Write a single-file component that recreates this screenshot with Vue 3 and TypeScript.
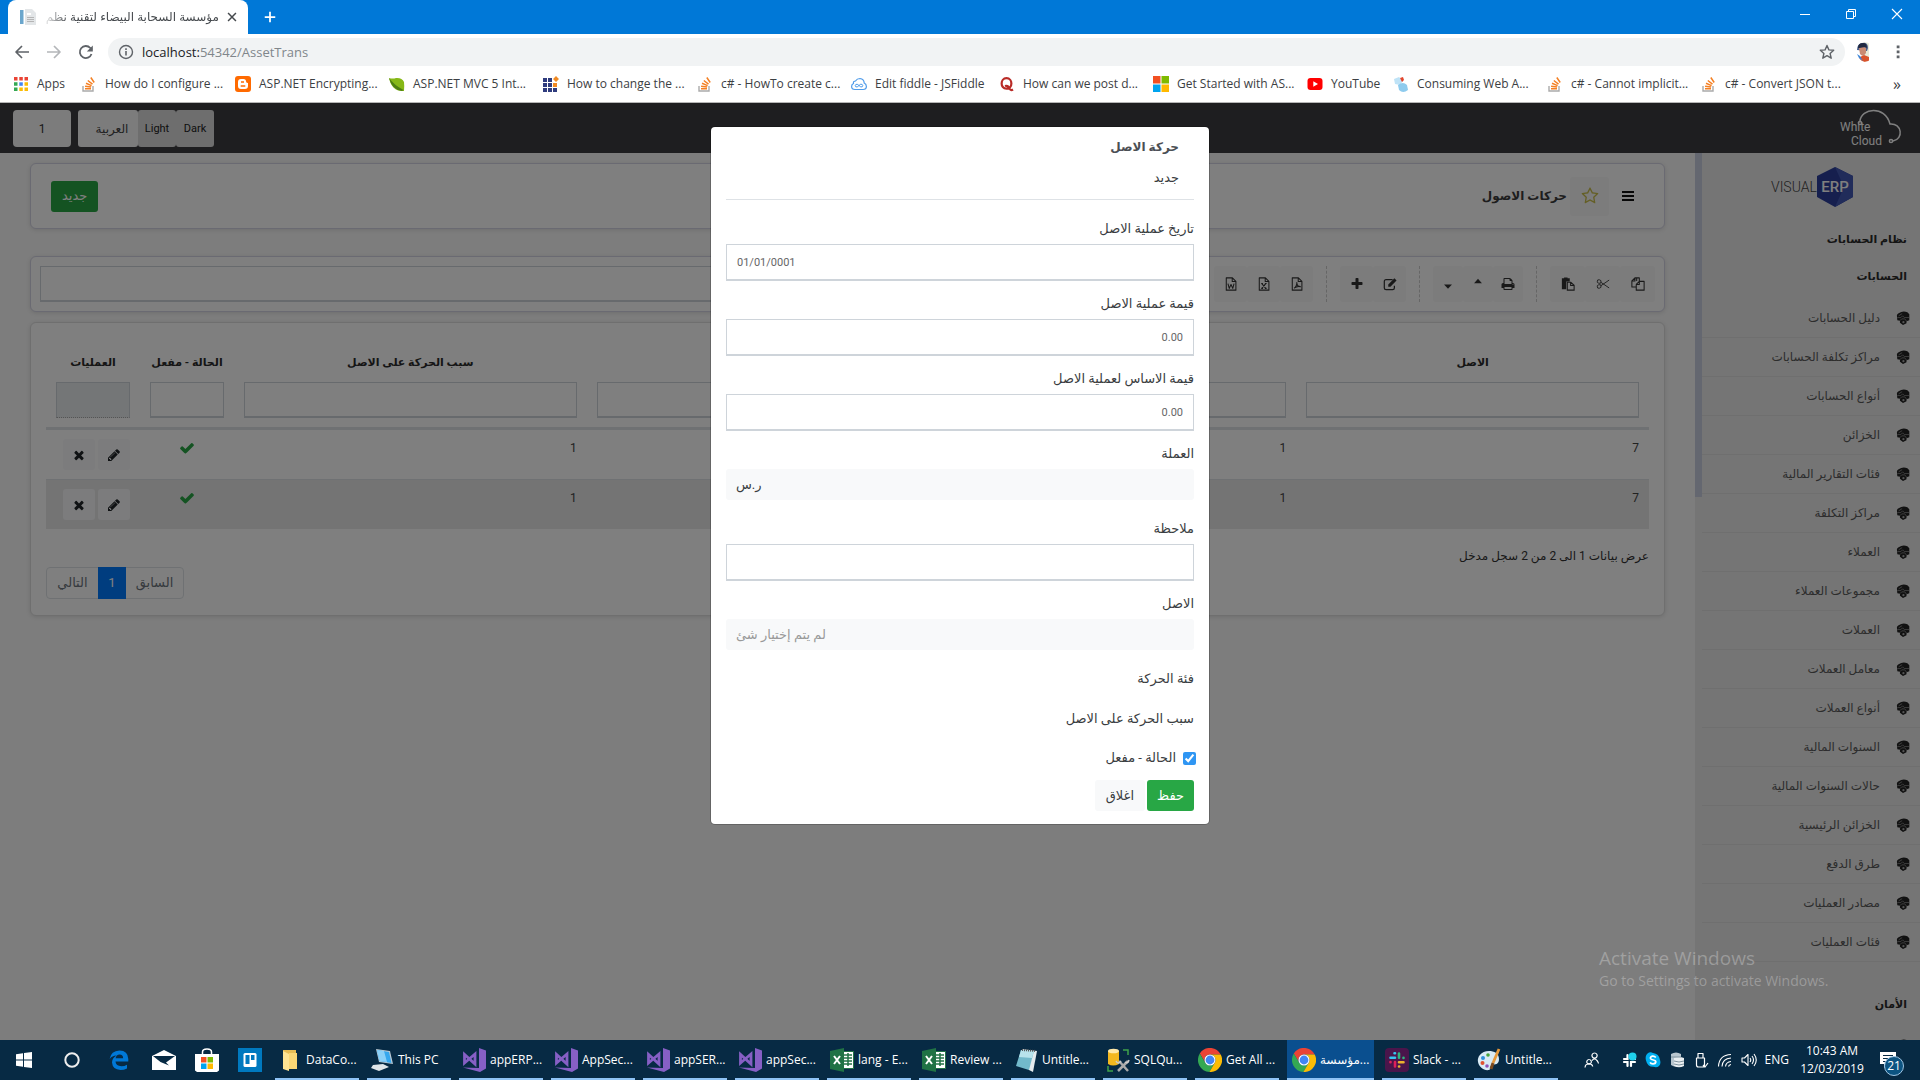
<script setup lang="ts">
import { ref } from 'vue'

interface Glyph { box: string; body: string }

const fa = (d: string): Glyph => ({ box: '0 0 1792 1792', body: `<path fill="currentColor" d="${d}"/>` })
const line = (d: string, w = 1.2): Glyph => ({
  box: '0 0 16 16',
  body: `<path fill="none" stroke="currentColor" stroke-width="${w}" stroke-linejoin="round" d="${d}"/>`,
})
const sheet = 'M2.6 1h7l4 4v10h-11zM9.4 1v4.2h4.2'

const glyphs: Record<string, Glyph> = {
  check: fa('M1671 566q0 40-28 68l-724 724-136 136q-28 28-68 28t-68-28l-136-136-362-362q-28-28-28-68t28-68l136-136q28-28 68-28t68 28l294 295 656-657q28-28 68-28t68 28l136 136q28 28 28 68z'),
  times: fa('M1490 1322q0 40-28 68l-136 136q-28 28-68 28t-68-28l-294-294-294 294q-28 28-68 28t-68-28l-136-136q-28-28-28-68t28-68l294-294-294-294q-28-28-28-68t28-68l136-136q28-28 68-28t68 28l294 294 294-294q28-28 68-28t68 28l136 136q28 28 28 68t-28 68l-294 294 294 294q28 28 28 68z'),
  pencil: fa('M491 1536l91-91-235-235-91 91v107h128v128h107zm523-928q0-22-22-22-10 0-17 7l-542 542q-7 7-7 17 0 22 22 22 10 0 17-7l542-542q7-7 7-17zm-54-192l416 416-832 832h-416v-416zm683 96q0 53-37 90l-166 166-416-416 166-165q36-38 90-38 53 0 91 38l235 234q37 39 37 91z'),
  plus: fa('M1600 736v192q0 40-28 68t-68 28h-416v416q0 40-28 68t-68 28h-192q-40 0-68-28t-28-68v-416h-416q-40 0-68-28t-28-68v-192q0-40 28-68t68-28h416v-416q0-40 28-68t68-28h192q40 0 68 28t28 68v416h416q40 0 68 28t28 68z'),
  star: fa('M1201 1004l306-297-422-62-189-382-189 382-422 62 306 297-73 421 378-199 377 199zm527-357q0 22-26 48l-363 354 86 500q1 7 1 20 0 50-41 50-19 0-40-12l-449-236-449 236q-22 12-40 12-21 0-31.5-14.5t-10.5-35.5q0-6 2-20l86-500-364-354q-25-27-25-48 0-37 56-46l502-73 225-455q19-41 49-41t49 41l225 455 502 73q56 9 56 46z'),
  print: fa('M448 1536h896v-256h-896v256zm0-640h896v-384h-160q-40 0-68-28t-28-68v-160h-640v640zm1152 64q0-26-19-45t-45-19-45 19-19 45 19 45 45 19 45-19 19-45zm128 0v416q0 13-9.5 22.5t-22.5 9.5h-224v160q0 40-28 68t-68 28h-960q-40 0-68-28t-28-68v-160h-224q-13 0-22.5-9.5t-9.5-22.5v-416q0-79 56.5-135.5t135.5-56.5h64v-544q0-40 28-68t68-28h672q40 0 88 20t76 48l152 152q28 28 48 76t20 88v256h64q79 0 135.5 56.5t56.5 135.5z'),
  bars: { box: '0 0 12 10', body: '<path fill="currentColor" d="M0 0h12v2H0zM0 4h12v2H0zM0 8h12v2H0z"/>' },
  up: { box: '0 0 16 16', body: '<path fill="currentColor" d="M3.5 7L8 2l4.500 5z"/>' },
  down: { box: '0 0 16 16', body: '<path fill="currentColor" d="M3.500 8.500h9L8 13.500z"/>' },
  copy: line('M6.500 4.500V1h-2L1 4.500v7h5M1 4.500h3.500V1M9.500 5v3.500H6V15h9V5H9.500L6 8.500M9.500 4.500V1h-3'),
  cut: line('M5.500 6L15 12.500M5.500 10L15 3.500M1.500 4.700a2.200 1.700 20 1 0 4.200 1a2.200 1.700 20 1 0-4.200-1M1.500 11.300a2.200 1.700-20 1 1 4.200-1a2.200 1.700-20 1 1-4.200 1', 1),
  paste: { box: '0 0 16 16', body: '<path fill="currentColor" d="M1 1.500h2.500V.5h4v1H10V5H6v9H1z"/><path fill="none" stroke="currentColor" stroke-width="1.200" d="M7.200 6h4L15 9.500V15H7.200zM11 6v3.800h4"/>' },
  edit: { box: '0 0 16 16', body: '<path fill="none" stroke="currentColor" stroke-width="1.400" d="M11 3H3.500Q1.500 3 1.500 5v7.500q0 2 2 2H11q2 0 2-2V10"/><path fill="currentColor" d="M6 8.500L13 1.500l2.500 2.500-7 7H6z"/>' },
  pdf: line(sheet + 'M4.600 12.800c2-1 3.600-4.500 3.200-6.500c0 3 1.600 4.600 4 4.700c-2.500-.6-5 .2-7.200 1.800'),
  excel: line(sheet + 'M5.500 7.500l4.500 5.500M10 7.500L5.500 13M4.800 7.500h2M9 7.500h2M4.800 13h2M9 13h2'),
  word: line(sheet + 'M4.500 7.500L6 13l2-4.500L10 13l1.500-5.500'),
  cube: {
    box: '0 0 16 16',
    body: '<path fill="#222" d="M1 5Q1 3.500 3 2.500Q8-.8 13 1.500l2.200 2.200v7L12 11.800V14L8 16l-3.500-2.500V11L1.500 10.500z"/><path fill="none" stroke="#888" d="M3 5.500l4-2.500M1.500 7.500h4l2-2 2 2h5.500M4.500 11l2-2h3.500l2 2.500"/><circle cx="8.500" cy="12.800" r="1.300" fill="#aaa"/>',
  },
  back: line('M15 8H2M8 2L2 8l6 6', 1.7),
  forward: line('M1 8h13M8 2l6 6-6 6', 1.7),
  reload: { box: '0 0 16 16', body: '<path fill="none" stroke="currentColor" stroke-width="1.800" d="M13.500 10A6 6 0 1 1 12.300 4L14 5.700"/><path fill="currentColor" d="M14.800 1.500v6h-6z"/>' },
  info: { box: '0 0 16 16', body: '<circle cx="8" cy="8" r="6.500" fill="none" stroke="currentColor" stroke-width="1.400"/><path fill="currentColor" d="M7.200 7h1.600v4.500H7.200zM7.200 4.300h1.600v1.600H7.200z"/>' },
  favourite: line('M8 1.500l1.900 4.400 4.800.4-3.600 3.200 1.100 4.700L8 11.700l-4.200 2.500 1.100-4.700L1.300 6.300l4.800-.4z', 1.4),
  close: line('M3.500 3.500l9 9M12.500 3.500l-9 9', 1.7),
  newtab: line('M8 2v12M2 8h12', 2),
  minimise: line('M3 8.500h10', 1),
  restore: line('M3.500 5.500h7v7h-7zM5.500 5.500v-2h7v7h-2', 1),
  quit: line('M3 3l10 10M13 3L3 13', 1.1),
  dots: { box: '0 0 16 16', body: '<path fill="currentColor" d="M6.700 1.500h2.800v2.800H6.700zM6.700 6.500h2.800v2.800H6.700zM6.700 11.500h2.800v2.800H6.700z"/>' },
  page: { box: '0 0 16 16', body: '<path fill="#e3e6e8" d="M5 0h7l4 4v12H5z"/><path fill="#6ba6cc" d="M0 1h3.500v14H0z"/><path fill="#fff" d="M7 4h4v2H7z"/><path stroke="#b5b5b5" d="M7 8.500h7M7 10.500h7M7 12.500h7"/>' },
  avatar: { box: '0 0 20 20', body: '<path fill="#e8ead8" d="M10 0h5v20h-5z"/><path fill="#4a5f8a" d="M3 8Q3 2 8 1q6-1 6 5l-1 3z"/><path fill="#c98a72" d="M5 6q4-2 7 0v5q-3 5-6 1z"/><path fill="#202840" d="M4 6q0-5 5-5 4 0 4 5l-2-1-6 1z"/><path fill="#d9532c" d="M6 15l4-2 5 2v5h-4q-5-1-6-5z"/><path fill="#3f86d8" d="M3 12l3 2 3 5-4-3z"/>' },
  apps: { box: '0 0 16 16', body: '<path fill="#ea4335" d="M1 1h3.500v3.500H1zM6.300 1h3.500v3.500H6.300zM11.500 1H15v3.500h-3.500z"/><path fill="#34a853" d="M1 6.300h3.500v3.500H1zM1 11.500h3.500V15H1z"/><path fill="#4285f4" d="M6.300 6.300h3.500v3.500H6.300z"/><path fill="#fbbc05" d="M11.500 6.300H15v3.500h-3.500zM6.300 11.500h3.500V15H6.300zM11.500 11.500H15V15h-3.500z"/>' },
  stack: { box: '0 0 16 16', body: '<path fill="none" stroke="#aaa" stroke-width="1.400" d="M2 10v5h10v-5"/><path stroke="#f48024" stroke-width="1.500" d="M4 12.700h6M4.100 10.200l6 .9M5 7.300l5.600 2.300M6.800 4.500l4.700 3.700M9.800 1.500l3.400 5"/>' },
  blogger: { box: '0 0 16 16', body: '<rect width="16" height="16" rx="3" fill="#ff6a00"/><path fill="#fff" fill-rule="evenodd" d="M6 3h2.500Q11 3 11.200 6q.2.900 1.800 1v3q0 3-3 3H6q-3 0-3-3V6q0-3 3-3zm0 2.300v1.500h3V5.300zM5.700 9.300v1.500h4.600V9.300z"/>' },
  leaf: { box: '0 0 16 16', body: '<path fill="#86b817" d="M0 2q4 1 7 0 6-.5 8 4 .5 4 0 9Q3 16 0 2z"/><path fill="#4d7f12" d="M0 2q5 7 14.500 12L13 15Q3 14 0 2z"/>' },
  grid: { box: '0 0 16 16', body: '<path fill="#2f3c7e" d="M0 2h4v4H0zM5 2h4v4H5zM0 7h4v4H0zM5 7h4v4H5zM10 7h4v4h-4zM0 12h4v4H0zM5 12h4v4H5zM10 12h4v4h-4z"/><path fill="#f08a24" d="M13 0l3 3-3 3-3-3zM10 7h4v4h-4z"/>' },
  fiddle: { box: '0 0 16 16', body: '<path fill="none" stroke="#4e9bea" stroke-width="1.200" d="M4 13.500Q.6 13.500.6 10.500 .6 8.300 2.500 7.500 2 5 4.500 5 6 2.500 9 2.500q4 .5 4.200 4.500 2.200 1 2.200 3.500 0 3-3.400 3z"/><path fill="none" stroke="#4e9bea" d="M8 9.500Q6 7.500 4.800 8.500q-1.200 1.200 0 2.300Q6 11.700 8 9.500t3.200-1q1.200 1.200 0 2.300Q10 11.700 8 9.500z"/>' },
  quora: { box: '0 0 16 16', body: '<path fill="none" stroke="#b92b27" stroke-width="2.200" d="M7.500 2.200c-6.500 0-6.500 10.500 0 10.500s6.500-10.500 0-10.500zM6 10q3-1 4.500 2.500 1.200 2.500 3.500 1"/>' },
  microsoft: { box: '0 0 16 16', body: '<path fill="#f25022" d="M0 0h7.500v7.500H0z"/><path fill="#7fba00" d="M8.500 0H16v7.500H8.500z"/><path fill="#00a4ef" d="M0 8.500h7.500V16H0z"/><path fill="#ffb900" d="M8.500 8.500H16V16H8.500z"/>' },
  youtube: { box: '0 0 16 16', body: '<rect x=".5" y="2" width="15" height="12" rx="3" fill="#f00"/><path fill="#fff" d="M6.300 5.300L11 8l-4.700 2.700z"/>' },
  consuming: { box: '0 0 16 16', body: '<path fill="#bfe3f7" d="M1 3l5-2 4 4-3 4-5-1z"/><path fill="#e2452c" d="M7 2l3-1 1 3-2 2z"/><path fill="#8ecbee" d="M5 9q5-4 9 0l1 5q-5 4-9 0z"/>' },
  windows: { box: '0 0 16 16', body: '<path fill="#fff" d="M0 2.200L7 1.200v6.300H0zM8 1l8-1v7.500H8zM0 8.500h7v6.300l-7-1zM8 8.500h8V16l-8-1z"/>' },
  cortana: { box: '0 0 16 16', body: '<circle cx="8" cy="8" r="6.700" fill="none" stroke="#eee" stroke-width="2"/>' },
  edge: { box: '0 0 20 20', body: '<path fill="#0078d7" d="M.6 9Q2 .8 10.500.5 19 .7 19.300 9v2.500H6.500q.3 4.500 6 4.700 3 0 5.500-1.500v3.800Q15 20 11.500 20 3.500 19.500 3 12.500 3 8 7.500 5.500 3 5.500.6 9zm6 -.8h7.500q0-3.700-3.500-3.700-3.500.2-4 3.700z"/>' },
  mail: { box: '0 0 24 20', body: '<path fill="#fff" d="M0 6L12 0l12 6v14H0z"/><path fill="#072a44" d="M1 6h22l-9 6.500 3 3L8.500 12z"/>' },
  store: { box: '0 0 24 24', body: '<path fill="none" stroke="#fff" stroke-width="1.500" d="M7.500 6V4q0-3 4.500-3t4.500 3v2"/><path fill="#fff" d="M0 6h24v16.500l-2 1.500H2l-2-1.500z"/><path fill="#f25022" d="M6 9h5.500v5.500H6z"/><path fill="#7fba00" d="M12.500 9H18v5.500h-5.500z"/><path fill="#00a4ef" d="M6 15.500h5.500V21H6z"/><path fill="#ffb900" d="M12.500 15.500H18V21h-5.500z"/>' },
  trello: { box: '0 0 24 24', body: '<path fill="#0079bf" d="M0 0h24v24H0z"/><rect x="5.500" y="5" width="13" height="14" rx="1.500" fill="#fff"/><path fill="#0079bf" d="M7.500 7h4v9h-4zM13 7h3.500v5H13z"/>' },
  folder: { box: '0 0 24 24', body: '<path fill="#e8bd55" d="M5 2h13v19H5z"/><path fill="#ffe493" d="M5 3l6 3v17l-6-2z"/><path fill="#fbd775" d="M11 5h8v16h-8z"/>' },
  pc: { box: '0 0 24 24', body: '<path fill="#b9c7d2" d="M6 1l14 2 3 13-14-2z"/><path fill="#35a7ee" d="M7 2l12 2 2.500 11-12-2z"/><path fill="#8ad0f8" d="M7 2l7 1 3 11-7.500-1z"/><path fill="#dfe5e9" d="M3 17l10-1 6 3-10 4-8-3z"/>' },
  vs: { box: '0 0 24 24', body: '<path fill="#865fc5" d="M17 0l7 2.500v18L18 24 1 19.500l16 .5z"/><path fill="none" stroke="#865fc5" stroke-width="2.800" d="M2.500 6.500v8.500L13 6v10z"/>' },
  xls: { box: '0 0 24 24', body: '<path fill="#fff" stroke="#207245" d="M12 3.500h11.500v17H12z"/><path stroke="#207245" stroke-width="1.500" d="M14 7h8M14 10h8M14 13h8M14 16h8M18 5v13"/><path fill="#207245" d="M0 3l14-3v24L0 21z"/><path stroke="#fff" stroke-width="2" d="M4 8l6 8M10 8l-6 8"/>' },
  note: { box: '0 0 24 24', body: '<path fill="#e5ebee" d="M8 1l15 2-4 21-4-2z"/><path fill="#72b9cb" d="M7 2l13 1-5 19L2 18z"/><path fill="#b8e3ec" d="M7 2l13 1-2 7-13-1z"/><path stroke="#555" stroke-dasharray="1 1" stroke-width="2" d="M8 2l14 1"/>' },
  sql: { box: '0 0 24 24', body: '<path fill="#f3b81f" d="M2 3h11v13q-6 3-11 0z"/><ellipse cx="7.500" cy="3" rx="5.500" ry="2.300" fill="#ffe9a8"/><path fill="none" stroke="#3fa24a" stroke-width="1.500" d="M17 2h5v5M2 18v5h5"/><path stroke="#aaa" stroke-width="2.500" d="M12 23l10-10M13 13l9 10"/><path fill="none" stroke="#ccc" stroke-width="1.500" d="M10 13q2 4 5 0M19 14q3 2 4-2"/>' },
  chrome: { box: '0 0 24 24', body: '<path fill="#ea4335" d="M1.800 5.600A12 12 0 0 1 22.700 6.500H12A5.500 5.500 0 0 0 7.200 14.700z"/><path fill="#34a853" d="M1.800 5.600A12 12 0 0 0 11.400 24L16.800 14.700A5.500 5.500 0 0 1 7.200 14.700z"/><path fill="#fbbc05" d="M22.700 6.500A12 12 0 0 1 11.400 24L16.800 14.700A5.500 5.500 0 0 0 12 6.500z"/><circle cx="12" cy="12" r="5.500" fill="#fff"/><circle cx="12" cy="12" r="4.400" fill="#4285f4"/>' },
  slack: { box: '0 0 24 24', body: '<rect width="24" height="24" rx="4" fill="#4a154b"/><g fill="none" stroke-width="2.600" stroke-linecap="round"><path stroke="#36c5f0" d="M10 5.300h-.5M10 9.700H5.500"/><path stroke="#2eb67d" d="M14 5.500v4.300M18.500 9.700v.2"/><path stroke="#e01e5a" d="M5.500 14v.2M10 14v4.500"/><path stroke="#ecb22e" d="M14 14.200h4.500M14 18.500h.2"/></g>' },
  paint: { box: '0 0 24 24', body: '<path fill="#d9ebf5" d="M12 3C4 3 0 9 1 14s6 9 11 8c3-1 0-4 3-5s7 0 7-6-5-8-10-8z"/><circle cx="6" cy="10" r="2" fill="#2f8fd8"/><circle cx="11" cy="7" r="1.800" fill="#46a43c"/><circle cx="5.500" cy="15" r="2" fill="#e0532f"/><circle cx="10" cy="18" r="1.800" fill="#8c53b8"/><path stroke="#e79a3c" stroke-width="2.800" d="M22 1l-6 14"/><path stroke="#7b4a1e" stroke-width="3" d="M16 15l-2 6"/>' },
  people: line('M5 7.500a2.300 2.300 0 1 0 .1 0M1 15.500q.5-4 4-4 3.200 0 3.700 3M10.500 1a2.600 2.600 0 1 0 .1 0M8 8.500q2.500-3 5 0 1.200 1.500 1.500 3', 1.2),
  slackTray: { box: '0 0 16 16', body: '<path stroke="#fff" stroke-width="2.200" stroke-linecap="round" d="M6.500 3v4H3M10 7h4M6.500 14v-4H3M10 14v-4h4M10 3v4" fill="none"/><circle cx="11.500" cy="4.500" r="4" fill="#1fd2ee"/>' },
  skype: { box: '0 0 16 16', body: '<path fill="#00aff0" d="M4 .5q2-.8 4 .5 6 .5 7 7 1.200 4-1 6t-5.500.8Q2.500 15 1 8.500-.5 3 4 .5z"/><path fill="none" stroke="#fff" stroke-width="1.700" d="M10.800 5.500Q9.500 4 7.500 4.200 5 4.800 5.500 6.500 6 7.700 8.300 8q2.700.5 2.500 2-.3 1.900-3 1.800-2 0-2.700-1.500"/>' },
  database: { box: '0 0 16 16', body: '<path fill="#b8c6cf" d="M2 2q5-3 10 0v11q-5 3-10 0z"/><path fill="#e9eef1" d="M5 6q5-2 10 0v8q-5 2.500-10 0z"/><path stroke="#7e929e" d="M2 5h10M5 9q5 2 10 0M5 12q5 2 10 0" fill="none"/>' },
  usb: line('M5 6V1.500h5V6M3.500 6h8v7q0 2-2 2h-4q-2 0-2-2zM10 13l2 2 3-4', 1.200),
  wifi: line('M1.500 14.500Q2 3 14 2.500M5 14.500Q5.500 6.500 14 6M8.500 14.500q.5-4.500 5.500-5M11.500 14.500q.5-1.800 2.500-2', 1.100),
  volume: line('M1 6h2.500L7 2.500v11L3.500 10H1zM9 6q1.500 2 0 4M11 4q3 4 0 8M13 2q4.500 6 0 12', 1.100),
  action: { box: '0 0 18 18', body: '<path fill="#fff" d="M1 1h16v12H9l-4 4v-4H1z"/><path stroke="#072a44" d="M4 4.500h10M4 7.500h10M4 10.500h6"/>' },
}

const bookmarks = [
  { icon: 'apps', label: 'Apps', size: 'apps' },
  { icon: 'stack', label: 'How do I configure ...', size: 'full' },
  { icon: 'blogger', label: 'ASP.NET Encrypting...', size: 'full' },
  { icon: 'leaf', label: 'ASP.NET MVC 5 Int...', size: 'full' },
  { icon: 'grid', label: 'How to change the ...', size: 'full' },
  { icon: 'stack', label: 'c# - HowTo create c...', size: 'full' },
  { icon: 'fiddle', label: 'Edit fiddle - JSFiddle', size: 'mid' },
  { icon: 'quora', label: 'How can we post d...', size: 'full' },
  { icon: 'microsoft', label: 'Get Started with AS...', size: 'full' },
  { icon: 'youtube', label: 'YouTube', size: 'short' },
  { icon: 'consuming', label: 'Consuming Web A...', size: 'full' },
  { icon: 'stack', label: 'c# - Cannot implicit...', size: 'full' },
  { icon: 'stack', label: 'c# - Convert JSON t...', size: 'full' },
]

const toolGroups = [
  { name: 'clipboard', tools: ['copy', 'cut', 'paste'] },
  { name: 'order', tools: ['print', 'up', 'down'] },
  { name: 'record', tools: ['edit', 'plus'] },
  { name: 'export', tools: ['pdf', 'excel', 'word'] },
]

const menu = [
  'دليل الحسابات', 'مراكز تكلفة الحسابات', 'أنواع الحسابات', 'الخزائن', 'فئات التقارير المالية',
  'مراكز التكلفة', 'العملاء', 'مجموعات العملاء', 'العملات', 'معامل العملات', 'أنواع العملات',
  'السنوات المالية', 'حالات السنوات المالية', 'الخزائن الرئيسية', 'طرق الدفع', 'مصادر العمليات', 'فئات العمليات',
]

const rows = [
  { asset: '7', category: '1', reason: '1' },
  { asset: '7', category: '1', reason: '1' },
]

const pinned = ['windows', 'cortana', 'edge', 'mail', 'store', 'trello']
const tasks = [
  { icon: 'folder', label: 'DataCo...' },
  { icon: 'pc', label: 'This PC' },
  { icon: 'vs', label: 'appERP...' },
  { icon: 'vs', label: 'AppSec...' },
  { icon: 'vs', label: 'appSER...' },
  { icon: 'vs', label: 'appSec...' },
  { icon: 'xls', label: 'lang - E...' },
  { icon: 'xls', label: 'Review ...' },
  { icon: 'note', label: 'Untitle...' },
  { icon: 'sql', label: 'SQLQu...' },
  { icon: 'chrome', label: 'Get All ...' },
  { icon: 'chrome', label: 'مؤسسة...', active: true },
  { icon: 'slack', label: 'Slack - ...' },
  { icon: 'paint', label: 'Untitle...' },
]
const tray = ['people', 'slackTray', 'skype', 'database', 'usb', 'wifi', 'volume']

const date = ref('01/01/0001')
const value = ref('0.00')
const baseValue = ref('0.00')
const note = ref('')
const enabled = ref(true)
const branch = ref('1')
</script>

<template>
  <div class="shell">
    <div class="tabs">
      <div class="tab">
        <svg class="i16" :viewBox="glyphs.page.box" v-html="glyphs.page.body" />
        <span class="tab-title" dir="rtl">مؤسسة السحابة البيضاء لتقنية نظم</span>
        <svg class="i14" :viewBox="glyphs.close.box" v-html="glyphs.close.body" />
      </div>
      <button class="new-tab"><svg class="i14" :viewBox="glyphs.newtab.box" v-html="glyphs.newtab.body" /></button>
      <div class="window-buttons">
        <button v-for="b in ['minimise', 'restore', 'quit']" :key="b">
          <svg class="i16" :viewBox="glyphs[b].box" v-html="glyphs[b].body" />
        </button>
      </div>
    </div>

    <div class="address">
      <button v-for="b in ['back', 'forward', 'reload']" :key="b" class="nav" :class="b">
        <svg class="i16" :viewBox="glyphs[b].box" v-html="glyphs[b].body" />
      </button>
      <div class="omnibox">
        <svg class="i16" :viewBox="glyphs.info.box" v-html="glyphs.info.body" />
        <span class="url"><b>localhost:</b>54342/AssetTrans</span>
        <svg class="i16" :viewBox="glyphs.favourite.box" v-html="glyphs.favourite.body" />
      </div>
      <svg class="avatar" :viewBox="glyphs.avatar.box" v-html="glyphs.avatar.body" />
      <svg class="i16" :viewBox="glyphs.dots.box" v-html="glyphs.dots.body" />
    </div>

    <nav class="bookmarks">
      <a v-for="(b, i) in bookmarks" :key="i" href="#" :class="b.size">
        <svg class="i16" :viewBox="glyphs[b.icon].box" v-html="glyphs[b.icon].body" />
        <span>{{ b.label }}</span>
      </a>
      <span class="more">»</span>
    </nav>

    <div class="page" dir="rtl">
      <header class="topbar">
        <svg class="cloud" viewBox="0 0 64 42">
          <g fill="none" stroke="#fff" stroke-width="1.500">
            <circle cx="21" cy="16" r="1.600" />
            <path d="M21 14C22 1 46-2 51 17C63 16 65 32 54 34" />
            <circle cx="52" cy="34" r="1.600" />
          </g>
          <g class="cloud-text" fill="#fff">
            <text x="1" y="24">White</text>
            <text x="12" y="38">Cloud</text>
          </g>
        </svg>
        <div class="topbar-tools" dir="ltr">
          <input v-model="branch" class="branch" aria-label="الفرع">
          <div class="switches">
            <button class="language">العربية</button>
            <button>Light</button>
            <button>Dark</button>
          </div>
        </div>
      </header>

      <div class="body">
        <aside class="sidebar">
          <div class="sidebar-main">
            <div class="logo" dir="ltr">
              <span>VISUAL</span>
              <svg viewBox="0 0 36 40">
                <path fill="#2c3f9c" d="M18 0l18 9v21l-18 10L0 30V9z" />
                <path fill="#4258b4" d="M18 0l18 9v21L18 40l9-20z" />
                <text x="18" y="25" text-anchor="middle" fill="#fff">ERP</text>
              </svg>
            </div>
            <h2>نظام الحسابات</h2>
            <h2>الحسابات</h2>
            <a v-for="item in menu" :key="item" href="#">
              <svg class="i14" :viewBox="glyphs.cube.box" v-html="glyphs.cube.body" />
              <span>{{ item }}</span>
            </a>
            <h2 class="security">الأمان</h2>
            <a href="#"><svg class="i14" :viewBox="glyphs.cube.box" v-html="glyphs.cube.body" /></a>
          </div>
          <div class="track"><div class="thumb" /></div>
        </aside>

        <main class="content">
          <section class="card title-card">
            <svg class="bars" :viewBox="glyphs.bars.box" v-html="glyphs.bars.body" />
            <button class="star"><svg class="i18" :viewBox="glyphs.star.box" v-html="glyphs.star.body" /></button>
            <h1>حركات الاصول</h1>
            <button class="btn green">جديد</button>
          </section>

          <section class="card tool-card">
            <div v-for="group in toolGroups" :key="group.name" class="tools" :class="group.name">
              <button v-for="t in group.tools" :key="t">
                <svg class="i14" :viewBox="glyphs[t].box" v-html="glyphs[t].body" />
              </button>
            </div>
            <input class="box search" aria-label="بحث">
          </section>

          <section class="card table-card">
            <table>
              <colgroup>
                <col class="wide"><col><col><col class="wide"><col class="narrow"><col class="narrow">
              </colgroup>
              <thead>
                <tr>
                  <th>الاصل</th>
                  <th />
                  <th />
                  <th>سبب الحركة على الاصل</th>
                  <th>الحالة - مفعل</th>
                  <th>العمليات</th>
                </tr>
                <tr class="filters">
                  <td v-for="n in 6" :key="n"><input class="box" :disabled="n === 6" aria-label="تصفية"></td>
                </tr>
              </thead>
              <tbody>
                <tr v-for="(r, i) in rows" :key="i">
                  <td>{{ r.asset }}</td>
                  <td>{{ r.category }}</td>
                  <td />
                  <td>{{ r.reason }}</td>
                  <td class="status"><svg class="i16" :viewBox="glyphs.check.box" v-html="glyphs.check.body" /></td>
                  <td>
                    <div class="actions">
                      <button v-for="a in ['pencil', 'times']" :key="a">
                        <svg class="i14" :viewBox="glyphs[a].box" v-html="glyphs[a].body" />
                      </button>
                    </div>
                  </td>
                </tr>
              </tbody>
            </table>
            <div class="table-foot">
              <p>عرض بيانات 1 الى 2 من 2 سجل مدخل</p>
              <div class="pager">
                <button class="prev">السابق</button>
                <button class="current">1</button>
                <button class="next">التالي</button>
              </div>
            </div>
          </section>
        </main>
      </div>

      <div class="backdrop">
        <form class="modal" role="dialog" @submit.prevent>
          <div class="modal-head">
            <h3>حركة الاصل</h3>
            <p>جديد</p>
          </div>
          <div class="field">
            <label for="date">تاريخ عملية الاصل</label>
            <input id="date" v-model="date" class="box" dir="ltr">
          </div>
          <div class="field">
            <label for="value">قيمة عملية الاصل</label>
            <input id="value" v-model="value" class="box">
          </div>
          <div class="field">
            <label for="base">قيمة الاساس لعملية الاصل</label>
            <input id="base" v-model="baseValue" class="box">
          </div>
          <div class="field">
            <label for="currency">العملة</label>
            <button id="currency" type="button" class="picker">ر.س</button>
          </div>
          <div class="field">
            <label for="note">ملاحظة</label>
            <input id="note" v-model="note" class="box">
          </div>
          <div class="field">
            <label for="asset">الاصل</label>
            <button id="asset" type="button" class="picker empty">لم يتم إختيار شئ</button>
          </div>
          <div class="field bare"><span>فئة الحركة</span></div>
          <div class="field bare"><span>سبب الحركة على الاصل</span></div>
          <label class="enabled"><input v-model="enabled" type="checkbox">الحالة - مفعل</label>
          <div class="modal-actions">
            <button class="btn green save">حفظ</button>
            <button type="button" class="btn plain">اغلاق</button>
          </div>
        </form>
      </div>

      <div class="watermark" dir="ltr">
        <p class="activate">Activate Windows</p>
        <p>Go to Settings to activate Windows.</p>
      </div>
    </div>

    <footer class="taskbar">
      <button v-for="p in pinned" :key="p" class="pin" :class="p">
        <svg :viewBox="glyphs[p].box" v-html="glyphs[p].body" />
      </button>
      <div class="tasks">
        <button v-for="(t, i) in tasks" :key="i" class="task" :class="{ active: t.active }">
          <svg class="i24" :viewBox="glyphs[t.icon].box" v-html="glyphs[t.icon].body" />
          <span>{{ t.label }}</span>
        </button>
      </div>
      <div class="tray">
        <svg v-for="t in tray" :key="t" class="i16" :class="t" :viewBox="glyphs[t].box" v-html="glyphs[t].body" />
        <span class="lang">ENG</span>
        <div class="clock"><span>10:43 AM</span><span>12/03/2019</span></div>
        <div class="action">
          <svg class="i18" :viewBox="glyphs.action.box" v-html="glyphs.action.body" />
          <span class="badge">21</span>
        </div>
      </div>
    </footer>
  </div>
</template>

<style>
body { margin: 0; overflow: hidden; }
</style>

<style scoped>
* { box-sizing: border-box; }
.shell {
  display: flex;
  flex-direction: column;
  height: 100vh;
  font: 12px/16px "Open Sans", "DejaVu Sans", sans-serif;
  color: #3c4043;
}
button, input { font: inherit; color: inherit; border: 0; padding: 0; margin: 0; background: none; }
a { color: inherit; text-decoration: none; }
h1, h2, h3, p { margin: 0; }
svg { display: block; flex: none; }
.i14 { width: 14px; height: 14px; }
.i16 { width: 16px; height: 16px; }
.i18 { width: 18px; height: 18px; }
.i24 { width: 24px; height: 24px; }

/* Browser window */
.tabs { display: flex; align-items: center; height: 34px; padding-left: 8px; background: #0078d7; color: #fff; }
.tab {
  display: flex; align-items: center; gap: 6px;
  width: 240px; height: 34px; padding: 0 9px 0 12px;
  background: #fff; color: #45494d; border-radius: 8px 8px 0 0;
}
.tab-title { flex: 1; overflow: hidden; white-space: nowrap; mask-image: linear-gradient(to left, #000 85%, transparent); }
.new-tab { margin-left: 15px; }
.window-buttons { display: flex; margin-left: auto; }
.window-buttons button { display: flex; justify-content: center; width: 46px; padding-bottom: 6px; }
.address { display: flex; align-items: center; height: 34px; padding: 4px 14px 2px; color: #5f6368; background: #fff; }
.address .nav { margin-right: 16px; }
.address .forward { color: #b4b6b9; }
.address .reload { margin-right: 14px; }
.omnibox {
  display: flex; align-items: center; gap: 8px; flex: 1;
  height: 28px; padding: 0 10px; border-radius: 14px; background: #f1f3f4;
}
.url { flex: 1; font-size: 13px; color: #80868b; }
.url b { font-weight: 400; color: #202124; }
.avatar { width: 20px; height: 20px; margin: 0 16px 0 9px; border-radius: 10px; }
.bookmarks {
  display: flex; align-items: center; gap: 22px;
  height: 35px; padding: 0 19px 3px 13px;
  background: #fff; border-bottom: 1px solid #b6b6b6;
}
.bookmarks a { display: flex; align-items: center; gap: 8px; flex: none; white-space: nowrap; }
.bookmarks .full { width: 132px; }
.bookmarks .mid { width: 126px; }
.bookmarks .short { width: 64px; }
.bookmarks .apps { width: 46px; }
.more { margin-left: auto; font-size: 16px; }

/* Application */
.page {
  position: relative; display: flex; flex-direction: column; flex: 1; min-height: 0; overflow: hidden;
  background: #fafafa; color: #333;
  font-family: Roboto, "DejaVu Sans", sans-serif;
}
.topbar { display: flex; justify-content: space-between; align-items: center; height: 50px; padding: 0 17px 0 13px; background: #3d3d41; flex: none; }
.cloud { width: 64px; height: 42px; }
.cloud-text { font: 12px Roboto, sans-serif; direction: ltr; }
.topbar-tools { display: flex; gap: 7px; height: 37px; }
.branch { width: 58px; padding-top: 2px; text-align: center; background: #f8f8f8; border-radius: 4px; }
.switches { display: flex; font-size: 11px; }
.switches button { width: 38px; padding-top: 2px; background: #dcdcdc; border-radius: 3px; color: #222; }
.switches .language { width: 60px; padding-left: 8px; background: #f8f8f8; color: #444; font-size: 12px; }
.body { display: flex; flex: 1; min-height: 0; }

.sidebar { display: flex; width: 225px; flex: none; background: #ebebeb; }
.sidebar-main { flex: 1; min-width: 0; overflow: hidden; }
.track { width: 7px; }
.thumb { height: 344px; background: #c8cfe1; }
.logo { display: flex; align-items: center; height: 67px; padding-left: 69px; color: #444; font-size: 14px; font-weight: 300; }
.logo svg { width: 36px; height: 40px; }
.logo text { font: 500 15px Roboto, sans-serif; }
.sidebar h2 { height: 37px; padding: 0 13px; font-size: 11px; line-height: 37px; color: #2b2b2b; }
.sidebar h2:first-of-type { margin-top: 1px; }
.sidebar a {
  display: flex; align-items: center; gap: 16px;
  height: 39px; padding: 0 10px; font-size: 12px; color: #5a5a5a; border-bottom: 1px solid #dfdfdf;
}
.sidebar .security { margin: 24px 0 0; }
.sidebar h2 + a { margin-top: 4px; }

.content { display: flex; flex-direction: column; flex: 1; min-width: 0; padding: 10px 30px 0; }
.card { background: #fff; border: 1px solid #d4d4e4; border-radius: 6px; box-shadow: 0 1px 4px rgba(0, 0, 0, .12); }
.title-card { display: flex; align-items: center; height: 66px; padding: 0 30px 0 20px; }
.bars { width: 12px; height: 10px; color: #111; }
.star { display: flex; align-items: center; justify-content: center; width: 39px; height: 39px; margin: 0 13px 0 3px; background: #f8f8f8; color: #c9be4a; border-radius: 3px; }
h1 { flex: 1; font-size: 12px; line-height: 24px; color: #3d3d3d; }
.btn { height: 31px; padding: 0 11px; border-radius: 3px; font-size: 13px; }
.green { background: #28a745; color: #fff; }
.tool-card { display: flex; height: 56px; margin-top: 27px; padding: 9px; }
.tools { display: flex; padding-left: 13px; margin-left: 13px; border-left: 1px dashed #ccc; color: #333; }
.tools button { display: flex; align-items: center; justify-content: center; width: 33px; background: #f8f8f8; border-radius: 3px; }
.clipboard button { width: 35px; }
.order button { width: 30px; }
.export { border: 0; padding: 0; }
.box { width: 100%; height: 36px; padding: 0 10px; background: #fff; border: 1px solid #ced4da; border-bottom-width: 2px; font-size: 11px; color: #666; }
.tool-card .search { flex: 1; width: auto; }
.table-card { height: 294px; margin-top: 10px; padding: 24px 15px 0; border-color: #dedede; }
table { width: 100%; table-layout: fixed; border-collapse: collapse; }
.narrow { width: 94px; }
.wide { width: 22%; }
th { height: 32px; padding: 0; font-size: 11px; color: #2b2b2b; white-space: nowrap; }
td { height: 49px; padding: 9px 10px; vertical-align: top; line-height: 18px; color: #444; text-align: right; }
tbody td { border-top: 1px solid #dee2e6; }
tbody tr:first-child td { border-top: 0; }
tbody tr:nth-child(2) { background: #e8e8e8; }
.filters td { height: 49px; padding: 3px 10px 9px; border-bottom: 3px solid #dee2e6; }
.box:disabled { background: #e9ecef; border-bottom: 1px dotted #aaa; }
.status { color: #28a745; }
.status svg { margin: 1px auto 0; }
.actions { display: flex; gap: 3px; }
.actions button { display: flex; align-items: center; justify-content: center; width: 32px; height: 31px; background: #f8f9fa; border-radius: 3px; color: #212529; }
.table-foot { display: flex; justify-content: space-between; padding-top: 14px; }
.table-foot p { font-size: 12px; line-height: 26px; }
.pager { display: flex; height: 32px; margin-top: 24px; border: 1px solid #dee2e6; border-radius: 4px; color: #6c757d; font-size: 13px; }
.pager .prev { width: 57px; }
.pager .current { width: 28px; margin: -1px 0; background: #007bff; color: #fff; }
.pager .next { width: 51px; }

.backdrop { position: absolute; inset: 0; display: flex; justify-content: center; align-items: flex-start; padding-top: 24px; background: rgba(0, 0, 0, .5); }
.modal { width: 498px; padding: 0 15px 13px; background: #fff; border-radius: 4px; box-shadow: 0 0 0 1px rgba(0, 0, 0, .2); color: #3a3d41; font-size: 13px; }
.modal .box { height: 37px; }
.modal-head { height: 73px; margin-bottom: 16px; padding: 8px 15px 0; border-bottom: 1px solid #dee2e6; }
h3 { font-size: 12px; line-height: 24px; color: #4b4f54; }
.modal-head p { margin-top: 7px; line-height: 24px; }
.field { display: flex; flex-direction: column; gap: 2px; min-height: 75px; }
.field label, .field span { line-height: 26px; }
.field.bare { min-height: 40px; }
.picker { height: 31px; padding: 0 10px; border-radius: 3px; background: #f8f9fa; text-align: left; }
.empty { color: #999; }
.enabled { display: flex; align-items: center; gap: 7px; height: 24px; margin-right: -2px; }
.enabled input { width: 13px; height: 13px; accent-color: #2f96f3; }
.modal-actions { display: flex; gap: 2px; margin-top: 10px; }
.save { padding: 0 10px; }
.plain { background: #f8f9fa; }
.watermark { position: absolute; right: 85px; bottom: 49px; width: 236px; color: rgba(255, 255, 255, .28); font: 14px/20px "Open Sans", sans-serif; white-space: nowrap; }
.activate { font-size: 19px; line-height: 26px; }

/* Windows taskbar */
.taskbar { display: flex; height: 40px; flex: none; background: #072a44; color: #fff; }
.pin { display: flex; align-items: center; justify-content: center; width: 43px; }
.pin svg { width: 24px; height: 24px; }
.windows, .cortana { width: 48px; }
.edge { width: 46px; }
.windows svg, .cortana svg { width: 16px; height: 16px; }
.edge svg { width: 20px; }
.tasks { display: flex; gap: 8px; margin-left: 4px; }
.task { display: flex; align-items: center; gap: 4px; width: 84px; padding: 2px 0 0 3px; border-bottom: 2px solid #8fc3f5; white-space: nowrap; overflow: hidden; }
.task.active { width: 87px; background: #0a4f8f; padding-left: 5px; }
.tray { display: flex; align-items: center; gap: 8px; margin-left: auto; padding-right: 23px; }
.tray .people { margin-right: 13px; }
.clock { display: flex; flex-direction: column; align-items: center; width: 64px; margin-left: 3px; line-height: 18px; }
.action { position: relative; margin-left: 7px; }
.badge { position: absolute; left: 5px; top: 5px; width: 20px; height: 20px; border: 1px solid #9fc6e4; border-radius: 10px; background: #0c5482; font-size: 12px; line-height: 18px; text-align: center; }
</style>
